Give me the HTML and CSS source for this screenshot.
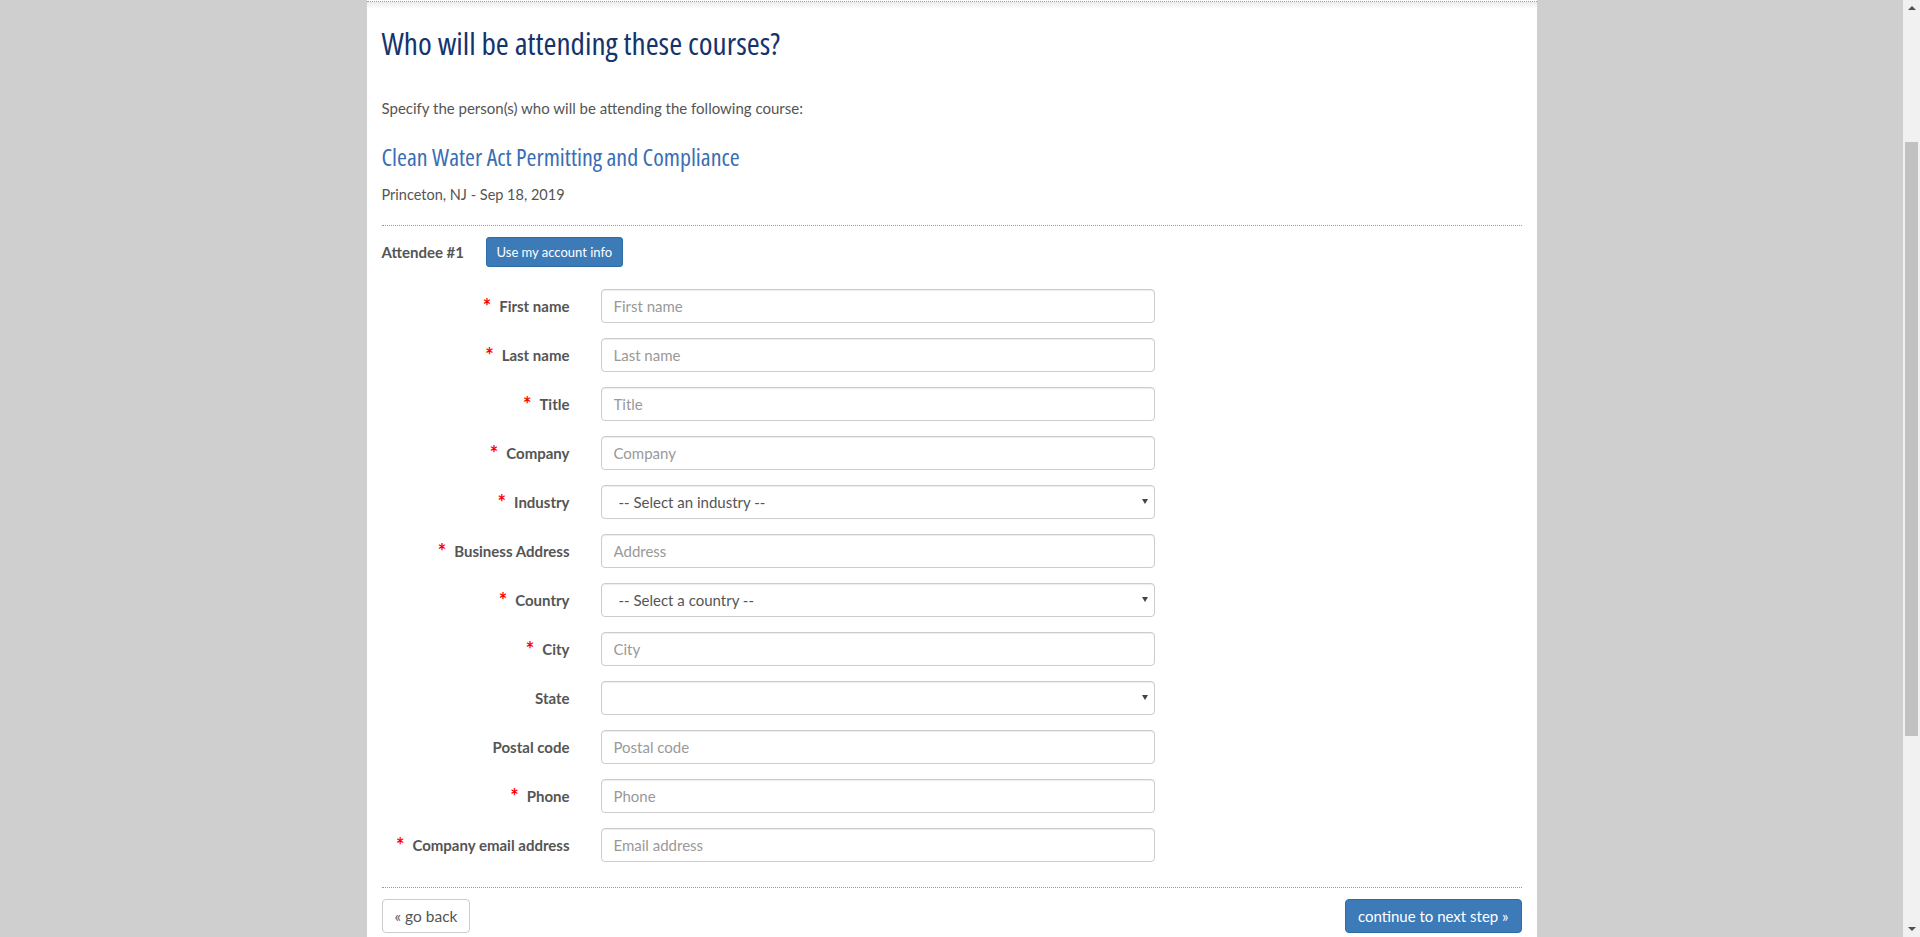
FILE: index.html
```html
<!DOCTYPE html>
<html lang="en">
<head>
<meta charset="utf-8">
<title>Who will be attending these courses?</title>
<link rel="stylesheet" href="styles.css">
</head>
<body>
<div class="page">
  <div class="viewport">
    <div class="container">
      <div class="topbar"></div>
      <h1 class="page-title">Who will be attending these courses?</h1>
      <p class="intro">Specify the person(s) who will be attending the following course:</p>
      <h2 class="course-title">Clean Water Act Permitting and Compliance</h2>
      <p class="course-meta">Princeton, NJ - Sep 18, 2019</p>
      <hr class="divider">
      <div class="attendee-head">
        <span class="attendee-label">Attendee #1</span>
        <button type="button" class="btn btn-primary btn-sm">Use my account info</button>
      </div>
      <form class="attendee-form">
        <div class="form-row"><label class="form-label"><span class="req">*</span>First name</label><input class="form-control" placeholder="First name"></div>
        <div class="form-row"><label class="form-label"><span class="req">*</span>Last name</label><input class="form-control" placeholder="Last name"></div>
        <div class="form-row"><label class="form-label"><span class="req">*</span>Title</label><input class="form-control" placeholder="Title"></div>
        <div class="form-row"><label class="form-label"><span class="req">*</span>Company</label><input class="form-control" placeholder="Company"></div>
        <div class="form-row"><label class="form-label"><span class="req">*</span>Industry</label>
          <div class="select-wrap"><select class="form-control form-select"><option>-- Select an industry --</option></select><span class="select-arrow"></span></div></div>
        <div class="form-row"><label class="form-label"><span class="req">*</span>Business Address</label><input class="form-control" placeholder="Address"></div>
        <div class="form-row"><label class="form-label"><span class="req">*</span>Country</label>
          <div class="select-wrap"><select class="form-control form-select"><option>-- Select a country --</option></select><span class="select-arrow"></span></div></div>
        <div class="form-row"><label class="form-label"><span class="req">*</span>City</label><input class="form-control" placeholder="City"></div>
        <div class="form-row"><label class="form-label">State</label>
          <div class="select-wrap"><select class="form-control form-select"><option></option></select><span class="select-arrow"></span></div></div>
        <div class="form-row"><label class="form-label">Postal code</label><input class="form-control" placeholder="Postal code"></div>
        <div class="form-row"><label class="form-label"><span class="req">*</span>Phone</label><input class="form-control" placeholder="Phone"></div>
        <div class="form-row"><label class="form-label"><span class="req">*</span>Company email address</label><input class="form-control" placeholder="Email address"></div>
      </form>
      <hr class="divider divider-bottom">
      <div class="actions">
        <button type="button" class="btn btn-default btn-back">« go back</button>
        <button type="button" class="btn btn-primary">continue to next step »</button>
      </div>
    </div>
  </div>
  <div class="scrollbar">
    <span class="sb-arrow sb-up"></span>
    <div class="sb-track"><div class="sb-thumb"></div></div>
    <span class="sb-arrow sb-down"></span>
  </div>
</div>
</body>
</html>
```
FILE: styles.css
```css
html, body {
  margin: 0;
  padding: 0;
  height: 937px;
  overflow: hidden;
}
body {
  background: #cfcfcf;
  font-family: "Lato", "Open Sans", sans-serif;
  font-size: 15px;
  color: #555;
}
.page {
  display: flex;
  height: 937px;
}
.viewport {
  flex: 1;
  display: flex;
  justify-content: center;
}
.container {
  width: 1140px;
  padding: 1px 15px 0;
  background: #fff;
  height: 936px;
}
.topbar {
  height: 7px;
  margin: 0 -15px;
  border-top: 1px dotted #9a9a9a;
  background: linear-gradient(#ececec, #fff);
}
.page-title {
  margin: 12px 0 0;
  font-family: "Open Sans", "DejaVu Sans Condensed", sans-serif;
  font-stretch: 75%;
  font-weight: 500;
  font-size: 31.4px;
  line-height: 44px;
  color: #15346d;
}
.intro {
  margin: 33px 0 0;
  line-height: 20px;
  font-size: 15px;
  color: #555;
}
.course-title {
  margin: 24px 0 0;
  font-family: "Open Sans", "DejaVu Sans Condensed", sans-serif;
  font-stretch: 75%;
  font-weight: 500;
  font-size: 24px;
  line-height: 30px;
  color: #3a6db3;
}
.course-meta {
  margin: 13px 0 0;
  line-height: 20px;
  font-size: 14.5px;
  color: #555;
}
.divider {
  margin: 20px 0 0;
  border: 0;
  border-top: 1px dotted #999;
  height: 0;
}
.attendee-head {
  display: flex;
  align-items: center;
  margin-top: 11px;
  height: 30px;
}
.attendee-label {
  width: 104px;
  font-weight: 700;
  font-size: 15px;
  color: #555;
}
.btn {
  font-family: "Lato", "Open Sans", sans-serif;
  font-size: 15px;
  line-height: 20px;
  padding: 6px 12px;
  border: 1px solid transparent;
  border-radius: 4px;
  cursor: pointer;
}
.btn-sm {
  font-size: 13px;
  line-height: 18px;
  padding: 5px 10px;
  border-radius: 3px;
}
.btn-back {
  font-size: 15.5px;
}
.btn-primary {
  background: #3c7ab8;
  border-color: #2e6da4;
  color: #fff;
}
.btn-default {
  background: #fff;
  border-color: #ccc;
  color: #555;
}
.attendee-form {
  margin-top: 22px;
  display: flex;
  flex-direction: column;
  gap: 15px;
}
.form-row {
  display: flex;
  align-items: center;
  gap: 31px;
}
.form-label {
  width: 188px;
  text-align: right;
  font-weight: 700;
  font-size: 15px;
  color: #555;
}
.req {
  color: #f00;
  font-size: 20px;
  line-height: 0;
  font-weight: 700;
  margin-right: 8px;
  position: relative;
  top: 2px;
}
.form-control {
  box-sizing: border-box;
  width: 554px;
  height: 34px;
  padding: 6px 12px;
  font-family: "Lato", "Open Sans", sans-serif;
  font-size: 15px;
  color: #555;
  background: #fff;
  border: 1px solid #ccc;
  border-radius: 4px;
  box-shadow: inset 0 1px 1px rgba(0,0,0,.075);
}
.form-control::placeholder {
  color: #999;
}
.select-wrap {
  position: relative;
  width: 554px;
}
.form-select {
  appearance: none;
  -webkit-appearance: none;
  padding-left: 17px;
}
.select-arrow {
  position: absolute;
  right: 7px;
  top: 14px;
  width: 0;
  height: 0;
  border-left: 3px solid transparent;
  border-right: 3px solid transparent;
  border-top: 5px solid #444;
  pointer-events: none;
}
.divider-bottom {
  margin-top: 25px;
}
.actions {
  margin-top: 11px;
  display: flex;
  justify-content: space-between;
}
.scrollbar {
  width: 17px;
  background: #f1f1f1;
  display: flex;
  flex-direction: column;
  align-items: center;
}
.sb-arrow {
  width: 0;
  height: 0;
  border-left: 4px solid transparent;
  border-right: 4px solid transparent;
}
.sb-up {
  margin-top: 6px;
  border-bottom: 4px solid #505050;
}
.sb-down {
  margin-bottom: 6px;
  border-top: 4px solid #505050;
}
.sb-track {
  flex: 1;
  width: 100%;
  display: flex;
  justify-content: center;
}
.sb-thumb {
  margin-top: 132px;
  width: 13px;
  height: 594px;
  background: #c1c1c1;
}
```
